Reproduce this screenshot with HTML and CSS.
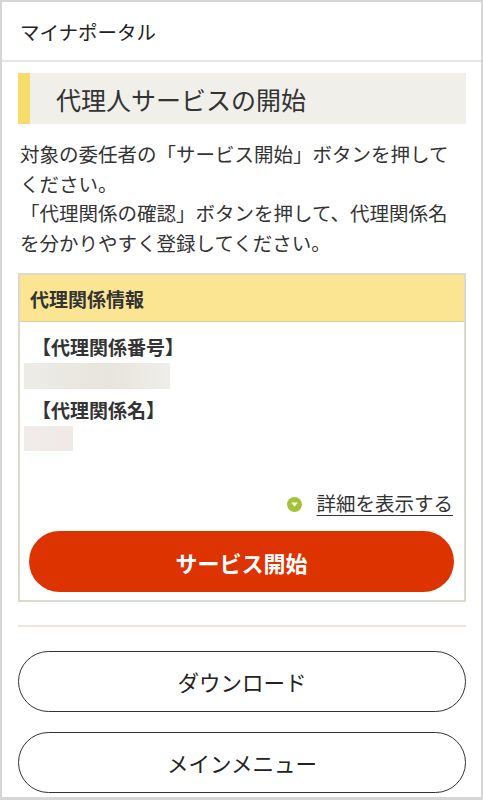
FILE: index.html
```html
<!DOCTYPE html>
<html lang="ja">

<head>
    <meta charset="UTF-8">
    <meta name="viewport" content="width=device-width, initial-scale=1.0">
    <title>マイナポータル</title>

    <link rel="stylesheet" href="styles.css">
</head>

<body>

    <div class="frame">
        <header class="topbar">マイナポータル</header>

        <main class="content">
            <h1 class="page-title">代理人サービスの開始</h1>

            <p class="lead">対象の委任者の「サービス開始」ボタンを押してください。<br>「代理関係の確認」ボタンを押して、代理関係名を分かりやすく登録してください。</p>

            <section class="card">
                <div class="card-head">代理関係情報</div>
                <div class="card-body">
                    <div class="field-label">【代理関係番号】</div>
                    <div class="masked masked-number"></div>

                    <div class="field-label">【代理関係名】</div>
                    <div class="masked masked-name"></div>

                    <div class="detail-row">
                        <a href="#" class="detail-link">
                            <svg class="detail-icon" width="15" height="15" viewBox="0 0 15 15">
                                <circle cx="7.5" cy="7.5" r="7.5" fill="#a3c236" />
                                <path d="M4.2 5.6 L10.8 5.6 L7.5 9.8 Z" fill="#fff" />
                            </svg>
                            <span class="detail-text">詳細を表示する</span>
                        </a>
                    </div>

                    <button class="btn-start">サービス開始</button>
                </div>
            </section>

            <hr class="divider">

            <button class="btn-outline">ダウンロード</button>
            <button class="btn-outline">メインメニュー</button>
        </main>
    </div>

</body>

</html>
```

FILE: styles.css
```css
* {
    box-sizing: border-box;
}

body {
    margin: 0;
    font-family: "Noto Sans CJK JP", "Noto Sans", sans-serif;
    color: #333;
    background: #fff;
}

.frame {
    height: 800px;
    overflow: hidden;
    border: 2px solid #d6d6d6;
    border-bottom-width: 3px;
}

.topbar {
    height: 60px;
    display: flex;
    align-items: center;
    padding-left: 18px;
    font-size: 19.5px;
    color: #222;
    border-bottom: 2px solid #e6e6e6;
}

.content {
    padding: 11px 15px 0 16px;
}

.page-title {
    margin: 0;
    height: 51px;
    display: flex;
    align-items: center;
    background-color: #f0efe9;
    border-left: 12px solid #f8dc6b;
    padding-left: 26px;
    font-size: 25px;
    font-weight: normal;
    color: #333;
}

.lead {
    margin: 15px 0 0 2px;
    font-size: 19.5px;
    line-height: 29.5px;
}

.card {
    margin-top: 16px;
    border: 2px solid #dcd9cd;
}

.card-head {
    height: 47px;
    display: flex;
    align-items: center;
    padding-left: 10px;
    background-color: #fbe592;
    border-bottom: 1px solid #d9cfa8;
    font-size: 19px;
    font-weight: bold;
}

.card-body {
    padding: 11px 8px 8px 4px;
}

.field-label {
    padding-left: 8px;
    font-size: 19px;
    font-weight: bold;
    line-height: 28px;
}

.masked {
    height: 26px;
    margin-top: 2px;
    margin-bottom: 7px;
}

.masked-number {
    width: 146px;
    background: linear-gradient(90deg, #ecebe6, #e7e5dd 60%, #efeee9);
}

.masked-name {
    width: 49px;
    height: 25px;
    background: linear-gradient(90deg, #f1ecea, #efe9e7);
}

.detail-row {
    margin-top: 38px;
    text-align: right;
    line-height: 28px;
    padding-right: 3px;
}

.detail-link {
    color: #333;
    text-decoration: none;
    font-size: 19.5px;
}

.detail-icon {
    vertical-align: -1px;
    margin-right: 6px;
}

.detail-text {
    text-decoration: underline;
    text-underline-offset: 4px;
    padding-left: 4px;
}

.btn-start {
    display: block;
    width: 425px;
    height: 61px;
    margin: 13px 0 0 5px;
    border: none;
    border-radius: 31px;
    background-color: #dd3300;
    color: #fff;
    font-family: inherit;
    font-size: 22px;
    font-weight: bold;
}

.divider {
    margin: 23px 0 0 0;
    border: none;
    border-top: 2px solid #ebe7da;
}

.btn-outline {
    display: block;
    width: 100%;
    height: 61px;
    margin-top: 24px;
    border: 1.5px solid #333;
    border-radius: 31px;
    background: #fff;
    color: #222;
    font-family: inherit;
    font-size: 21.5px;
}

.btn-outline + .btn-outline {
    margin-top: 20px;
}
```
